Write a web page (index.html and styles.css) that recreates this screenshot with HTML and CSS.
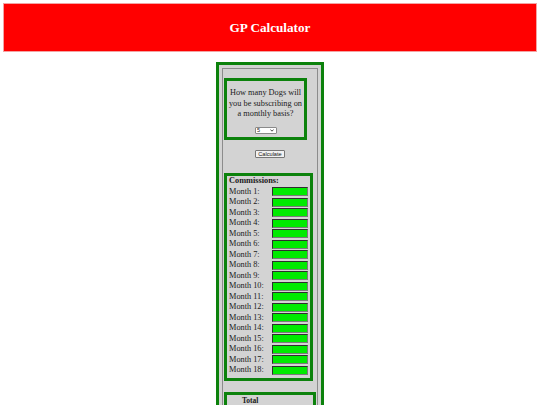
FILE: index.html
```html
<!DOCTYPE html>
<html lang="en">
<head>
<meta charset="utf-8">
<title>GP Calculator</title>
<link rel="stylesheet" href="styles.css">
</head>
<body>
<header class="topbar">
  <h1 class="title">GP Calculator</h1>
</header>
<main class="panel">
  <div class="panel-inner">
    <section class="question">
      <p class="question-text">How many Dogs will you be subscribing on a monthly basis?</p>
      <div class="select">
        <span class="select-value">5</span>
        <svg class="chevron" width="4" height="3" viewBox="0 0 4 3"><path d="M0.4 0.5 L2 2.2 L3.6 0.5" fill="none" stroke="#222" stroke-width="0.8"/></svg>
      </div>
    </section>
    <div class="actions">
      <button class="calc-btn" type="button">Calculate</button>
    </div>
    <section class="commissions">
      <div class="com-title">Commissions:</div>
      <div class="row"><span class="label">Month 1:</span><span class="field"></span></div>
      <div class="row"><span class="label">Month 2:</span><span class="field"></span></div>
      <div class="row"><span class="label">Month 3:</span><span class="field"></span></div>
      <div class="row"><span class="label">Month 4:</span><span class="field"></span></div>
      <div class="row"><span class="label">Month 5:</span><span class="field"></span></div>
      <div class="row"><span class="label">Month 6:</span><span class="field"></span></div>
      <div class="row"><span class="label">Month 7:</span><span class="field"></span></div>
      <div class="row"><span class="label">Month 8:</span><span class="field"></span></div>
      <div class="row"><span class="label">Month 9:</span><span class="field"></span></div>
      <div class="row"><span class="label">Month 10:</span><span class="field"></span></div>
      <div class="row"><span class="label">Month 11:</span><span class="field"></span></div>
      <div class="row"><span class="label">Month 12:</span><span class="field"></span></div>
      <div class="row"><span class="label">Month 13:</span><span class="field"></span></div>
      <div class="row"><span class="label">Month 14:</span><span class="field"></span></div>
      <div class="row"><span class="label">Month 15:</span><span class="field"></span></div>
      <div class="row"><span class="label">Month 16:</span><span class="field"></span></div>
      <div class="row"><span class="label">Month 17:</span><span class="field"></span></div>
      <div class="row"><span class="label">Month 18:</span><span class="field"></span></div>
    </section>
    <section class="total">
      <div class="total-title">Total</div>
      <div class="total-body"></div>
    </section>
  </div>
</main>
</body>
</html>
```
FILE: styles.css
```css
html, body {
  margin: 0;
  padding: 0;
  background: #ffffff;
  font-family: "Liberation Serif", "Times New Roman", serif;
  color: #1a1a1a;
}

.topbar {
  margin: 3px;
  height: 49px;
  box-sizing: border-box;
  background: #ff0000;
  border: 1px solid #f3a3a3;
  display: flex;
  align-items: center;
  justify-content: center;
}

.title {
  margin: 0;
  color: #ffffff;
  font-size: 13.2px;
  font-weight: bold;
  line-height: 1;
}

.panel {
  display: block;
  width: 108px;
  box-sizing: border-box;
  margin: 10px auto 0;
  border: 3px solid #0c820c;
  background: #d3d3d3;
  padding: 3px;
}

.panel-inner {
  border: 1px solid #8c8c8c;
  padding: 9px 0 0 1px;
  font-size: 8.3px;
  line-height: 10.5px;
}

.question {
  width: 83px;
  height: 62px;
  box-sizing: border-box;
  border: 3px solid #0c820c;
  padding: 7px 1px 0;
  text-align: center;
}

.question-text {
  margin: 0;
}

.select {
  width: 22px;
  height: 7px;
  box-sizing: border-box;
  margin: 7.5px auto 0;
  background: #ffffff;
  border: 1px solid #8a8a8a;
  border-radius: 1px;
  display: flex;
  align-items: center;
  justify-content: space-between;
  padding: 0 1.5px 0 1.5px;
  font-family: "Liberation Sans", Arial, sans-serif;
  font-size: 5.5px;
  line-height: 5px;
}

.chevron {
  display: block;
}

.actions {
  padding-top: 10px;
  padding-right: 1px;
  display: flex;
  justify-content: center;
}

.calc-btn {
  width: 30px;
  height: 8px;
  box-sizing: border-box;
  padding: 0;
  margin: 0;
  background: #f2f2f2;
  border: 1px solid #767676;
  border-radius: 1px;
  font-family: "Liberation Sans", Arial, sans-serif;
  font-size: 5.6px;
  line-height: 5px;
  color: #111;
}

.commissions {
  margin-top: 15px;
  width: 89px;
  box-sizing: border-box;
  border: 3px solid #0c820c;
  padding: 0 2px 2px 2px;
}

.com-title {
  font-weight: bold;
}

.row {
  height: 10.5px;
  display: flex;
  align-items: center;
  justify-content: space-between;
}

.field {
  width: 36px;
  height: 9px;
  box-sizing: border-box;
  background: #00ea00;
  border: 1px solid;
  border-color: #2e2e2e #7a7a7a #7a7a7a #2e2e2e;
}

.total {
  margin-top: 11px;
  width: 92px;
  box-sizing: border-box;
  border: 3px solid #0c820c;
  padding: 1px 2px 2px 15px;
}

.total-title {
  font-weight: bold;
  font-size: 7.5px;
  line-height: 9px;
}

.total-body {
  height: 40px;
}
```
